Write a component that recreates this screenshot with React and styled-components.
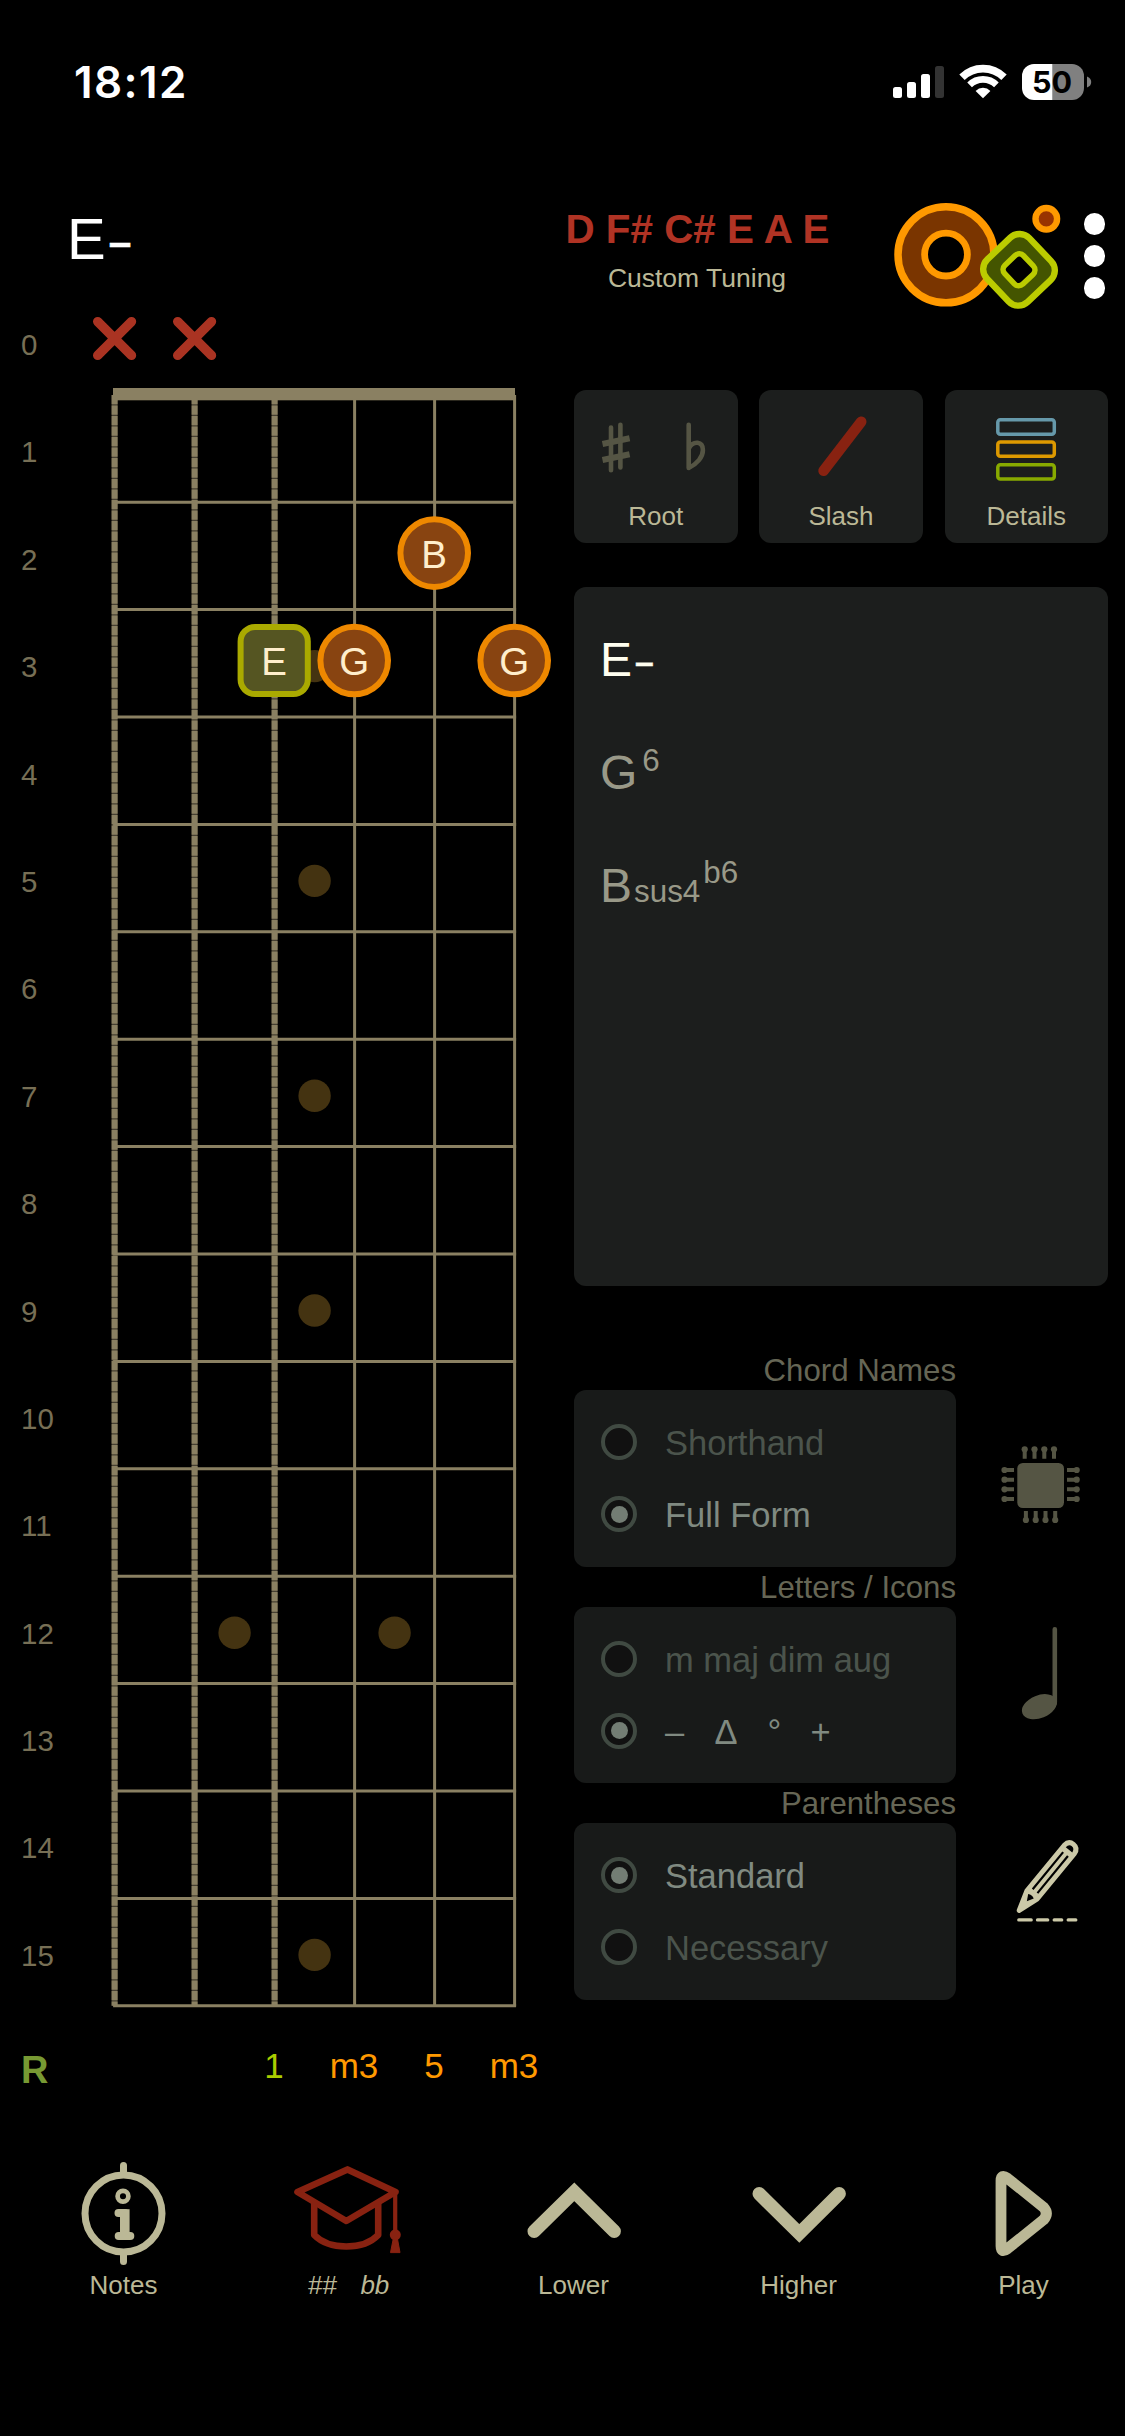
import React from 'react';
import styled, { createGlobalStyle } from 'styled-components';

const GlobalStyle = createGlobalStyle`
  body {
    margin: 0;
    background: #000;
    overflow: hidden;
  }
  * {
    box-sizing: border-box;
  }
  svg {
    display: block;
    flex-shrink: 0;
    overflow: visible;
  }
`;

const Screen = styled.div`
  width: 1125px;
  height: 2436px;
  overflow: hidden;
  background: #000;
  font-family: "Liberation Sans", Arial, sans-serif;
`;

const StatusBar = styled.div`
  height: 130px;
  display: flex;
  justify-content: space-between;
  padding: 60px 30px 0 74px;
`;

const Time = styled.div`
  color: #fff;
  font-family: Inter, sans-serif;
  font-weight: 600;
  font-size: 44px;
  line-height: 44px;
  letter-spacing: 1.4px;
`;

const Header = styled.header`
  height: 162px;
  display: flex;
  align-items: flex-start;
`;

const Title = styled.div`
  width: 558px;
  padding: 79px 0 0 67px;
  color: #fff;
  font-size: 58px;
  line-height: 60px;
`;

const Minus = styled.span`
  font-size: 0.7em;
  line-height: 0;
  font-weight: 700;
  margin-left: 3px;
  vertical-align: 0.08em;
  -webkit-text-stroke: 0.012em currentColor;
`;

const Tuning = styled.div`
  width: 280px;
  margin-right: 42px;
  padding-top: 77px;
  text-align: center;
  white-space: nowrap;
`;

const TuningNotes = styled.div`
  padding-right: 1px;
  color: #b03324;
  font-size: 40.4px;
  line-height: 44px;
  font-weight: 700;
`;

const TuningName = styled.div`
  margin-top: 12px;
  padding-right: 2px;
  color: #bbb896;
  font-size: 26.5px;
  line-height: 30px;
`;

const Menu = styled.div`
  width: 49px;
  padding-top: 83px;
  display: flex;
  flex-direction: column;
  align-items: center;
  gap: 10.4px;
`;

const MenuDot = styled.div`
  width: 21.8px;
  height: 21.8px;
  border-radius: 50%;
  background: #fff;
`;

const Main = styled.main`
  display: flex;
  height: 1831px;
`;

const Left = styled.div`
  width: 574px;
`;

const Neck = styled.div`
  display: flex;
  height: 1718px;
`;

const FretNumbers = styled.div`
  width: 75px;
  padding-left: 21px;
`;

const FretNumber = styled.div`
  height: 107.4px;
  line-height: 106px;
  font-size: 29.5px;
  color: #776f55;
`;

const Intervals = styled.div`
  display: grid;
  grid-template-columns: 74px repeat(6, 80px);
  font-size: 35px;
  line-height: 112px;
  text-align: center;
`;

const RootLabel = styled.div`
  padding: 4px 0 0 21px;
  font-size: 38px;
  font-weight: 700;
  text-align: left;
  color: #779933;
`;

const Interval = styled.div`
  color: ${({ $root }) => ($root ? '#aacc00' : '#ff9900')};
`;

const Right = styled.div`
  width: 534px;
  padding-top: 98px;
`;

const Cards = styled.div`
  display: flex;
  justify-content: space-between;
`;

const Card = styled.button`
  width: 163.5px;
  height: 153px;
  padding: 0;
  border: 0;
  border-radius: 12px;
  background: #1c1e1d;
  display: flex;
  flex-direction: column;
  font-family: inherit;
`;

const CardLabel = styled.span`
  width: 100%;
  text-align: center;
  font-size: 26px;
  line-height: 30px;
  color: #bbb896;
`;

const ChordPanel = styled.div`
  margin-top: 44px;
  height: 699px;
  padding: 16px 0 0 26px;
  border-radius: 12px;
  background: #1c1e1d;
`;

const Chord = styled.div`
  height: 113px;
  line-height: 113px;
  font-size: 48px;
  color: ${({ $active }) => ($active ? '#fffff0' : '#999988')};
`;

const Small = styled.span`
  font-size: 31.4px;
  line-height: 0;
  margin-left: ${({ $gap }) => $gap || 0}px;
  vertical-align: ${({ $up }) => $up || 0}px;
`;

const Options = styled.div`
  margin-top: 64px;
`;

const OptionGroup = styled.section`
  display: grid;
  grid-template-columns: 382px 152px;
  grid-template-rows: 40px 176.6px;
`;

const OptionTitle = styled.div`
  grid-column: 1 / 3;
  width: 382px;
  text-align: right;
  font-size: 31.2px;
  line-height: 42px;
  color: #666655;
`;

const OptionBox = styled.div`
  padding: 16px 0 0 27px;
  border-radius: 12px;
  background: #181a19;
`;

const Option = styled.div`
  height: 72px;
  display: flex;
  align-items: center;
  gap: 28px;
`;

const Radio = styled.span`
  width: 36px;
  height: 36px;
  border-radius: 50%;
  border: 4px solid #404a42;
  background: #111;
  display: flex;
  align-items: center;
  justify-content: center;
  &::after {
    content: "";
    width: 17px;
    height: 17px;
    border-radius: 50%;
    background: ${({ $on }) => ($on ? '#737d74' : 'transparent')};
  }
`;

const OptionText = styled.span`
  padding-top: 2px;
  font-size: 34.5px;
  line-height: 40px;
  white-space: pre;
  color: ${({ $on }) => ($on ? '#808a81' : '#4b544c')};
`;

const Symbols = styled.span`
  display: inline-grid;
  grid-template-columns: 49.5px 53px 43px 30px;
  font-size: 34.5px;
`;

const NavBar = styled.nav`
  display: flex;
  justify-content: space-between;
  padding: 32px 21.5px 0 43.5px;
`;

const NavItem = styled.div`
  width: 160px;
`;

const NavLabel = styled.div`
  text-align: center;
  font-size: 26px;
  line-height: 30px;
  color: #bbb896;
  white-space: pre;
  font-style: ${({ $italic }) => ($italic ? 'italic' : 'normal')};
  word-spacing: ${({ $italic }) => ($italic ? '0.7px' : '0')};
`;

const WOOD = '#8a8062';
const SAND = '#bbb896';
const RED = '#882211';
const OLIVE = '#555544';

const stringX = (i) => 39.6 + i * 80;
const fretY = (n) => 102.8 + n * 107.4;

const inlays = [[2.5, 3], [2.5, 5], [2.5, 7], [2.5, 9], [1.5, 12], [3.5, 12], [2.5, 15]];

const markers = [
  { string: 4, fret: 2, note: 'B' },
  { string: 2, fret: 3, note: 'E', root: true },
  { string: 3, fret: 3, note: 'G' },
  { string: 5, fret: 3, note: 'G' },
];

const intervals = ['', '', '1', 'm3', '5', 'm3'];

function StatusIcons() {
  return (
    <svg width="210" height="44" viewBox="885 60 210 44">
      <rect x="893" y="87" width="9" height="11" rx="2.5" fill="#fff" />
      <rect x="907" y="82" width="9" height="16" rx="2.5" fill="#fff" />
      <rect x="921" y="74" width="9" height="24" rx="2.5" fill="#fff" />
      <rect x="935" y="66" width="9" height="32" rx="2.5" fill="#333" />
      <path d="M962 77.3A29.7 29.7 0 0 1 1004 77.3" fill="none" stroke="#fff" strokeWidth="7.6" />
      <path d="M969.6 84.9A19 19 0 0 1 996.4 84.9" fill="none" stroke="#fff" strokeWidth="6.6" />
      <path d="M983 98.3L975.6 90.9A10.5 10.5 0 0 1 990.4 90.9Z" fill="#fff" />
      <path d="M1052.7 64H1034a12 12 0 0 0-12 12v12a12 12 0 0 0 12 12h18.7z" fill="#fff" />
      <path d="M1052.7 64H1072a12 12 0 0 1 12 12v12a12 12 0 0 1-12 12h-19.3z" fill="#808080" />
      <path d="M1087 76.5q4.2 1.5 4.2 5.5t-4.2 5.5z" fill="#808080" />
      <text x="1052" y="93.3" textAnchor="middle" fontFamily="Inter, sans-serif" fontWeight="700" fontSize="30.5" fill="#000">50</text>
    </svg>
  );
}

function Logo() {
  return (
    <svg width="190" height="180" viewBox="880 130 190 180">
      <circle cx="946" cy="254.8" r="48" fill="#7a3500" stroke="#ff9900" strokeWidth="7.5" />
      <circle cx="946" cy="254.6" r="21.4" fill="#000" stroke="#ff9900" strokeWidth="6.8" />
      <circle cx="1046.3" cy="218.8" r="10.8" fill="#993300" stroke="#ff9900" strokeWidth="6.4" />
      <g stroke="#bbcc00" transform="translate(1019 269.8) rotate(46.5)">
        <rect x="-29.3" y="-29.3" width="58.6" height="58.6" rx="13.5" fill="#445500" strokeWidth="6.4" />
        <rect x="-13" y="-13" width="26" height="26" rx="6" fill="#000" strokeWidth="5.6" />
      </g>
    </svg>
  );
}

function Fretboard() {
  const frets = Array.from({ length: 15 }, (_, i) => i + 1);
  return (
    <svg width="480" height="1718" viewBox="0 0 480 1718">
      {[0, 1].map((i) => (
        <path
          key={i}
          d={`M${stringX(i) - 16.9} 29.6l33.8 33.8m0 -33.8l-33.8 33.8`}
          stroke="#aa3322"
          strokeWidth="9.4"
          strokeLinecap="round"
        />
      ))}
      {inlays.map(([s, f]) => (
        <circle key={`${s}-${f}`} cx={stringX(s)} cy={fretY(f - 0.5) + 2.8} r="16.2" fill="#443311" />
      ))}
      {[0, 1, 2, 3, 4, 5].map((i) => (
        <g key={i} stroke={WOOD}>
          {i < 3 && <path d={`M${stringX(i)} 103V${fretY(15)}`} strokeWidth="6" stroke="#453f31" />}
          <path
            d={`M${stringX(i)} 103V${fretY(15)}`}
            strokeWidth={i < 3 ? 6 : 3}
            strokeDasharray={i < 3 ? '9.2 1.3' : undefined}
          />
        </g>
      ))}
      {frets.map((n) => (
        <path key={n} d={`M${stringX(0) - 1.5} ${fretY(n)}H${stringX(5) + 1.5}`} stroke={WOOD} strokeWidth="3" />
      ))}
      <rect x="38" y="96" width="402" height="12.3" fill={WOOD} />
      {markers.map(({ string, fret, note, root }) => (
        <g key={`${string}-${fret}`} transform={`translate(${stringX(string) - 0.4} ${fretY(fret - 0.5) - 2.8})`}>
          {root ? (
            <rect x="-33.6" y="-33.6" width="67.2" height="67.2" rx="14.5" fill="#555522" stroke="#aaaa00" strokeWidth="6" />
          ) : (
            <circle r="33.8" fill="#884411" stroke="#ee8800" strokeWidth="6" />
          )}
          <text y="14.5" textAnchor="middle" fontSize="38.5" fill="#ffeecc">{note}</text>
        </g>
      ))}
    </svg>
  );
}

function RootIcon() {
  return (
    <svg width="163" height="111" viewBox="0 0 163 111" fill="none" stroke={OLIVE} strokeWidth="4.6">
      <path d="M37 37.6V80.3M46.4 34.8V77.5" strokeLinecap="round" />
      <path d="M28.5 54L55.6 48.2M28.5 70L55.6 64.3" strokeWidth="6" />
      <path d="M114.7 34.8V78C123 74 129 67 128.9 60C128.8 51 119.5 50.5 115 58" strokeLinecap="round" strokeLinejoin="round" />
    </svg>
  );
}

function SlashIcon() {
  return (
    <svg width="163" height="111" viewBox="0 0 163 111">
      <path d="M64.6 80.8L102.2 31.8" stroke={RED} strokeWidth="10.6" strokeLinecap="round" />
    </svg>
  );
}

function DetailsIcon() {
  return (
    <svg width="163" height="111" viewBox="0 0 163 111" fill="none" strokeWidth="3.5">
      <rect x="52.8" y="29.7" width="56.5" height="14.5" rx="2.5" stroke="#6699aa" />
      <rect x="52.8" y="52.1" width="56.5" height="14.2" rx="2.5" stroke="#dd9900" />
      <rect x="52.8" y="74.7" width="56.5" height="14.2" rx="2.5" stroke="#88aa00" />
    </svg>
  );
}

function ChipIcon() {
  const top = [68.7, 78.5, 88.3, 98];
  const side = [80, 89.7, 99.3, 109];
  return (
    <svg width="152" height="177" viewBox="0 0 152 177" fill={OLIVE} stroke={OLIVE}>
      <rect x="61.3" y="73" width="46.7" height="45" rx="5.5" stroke="none" />
      {top.map((x) => (
        <g key={x} strokeWidth="4">
          <path d={`M${x} 59V68.7M${x + 1.2} 121V131`} />
          <circle cx={x} cy="59.3" r="3.1" stroke="none" />
          <circle cx={x + 1.2} cy="130" r="3.1" stroke="none" />
        </g>
      ))}
      {side.map((y) => (
        <g key={y} strokeWidth="4">
          <path d={`M48.5 ${y}H58M111 ${y}H121`} />
          <circle cx="48.5" cy={y} r="3.1" stroke="none" />
          <circle cx="120.7" cy={y} r="3.1" stroke="none" />
        </g>
      ))}
    </svg>
  );
}

function NoteIcon() {
  return (
    <svg width="152" height="177" viewBox="0 0 152 177" fill={OLIVE}>
      <path d="M96.5 22.3a2.3 2.3 0 0 1 4.6 0V95q0 4-4.6 8z" />
      <ellipse cx="83.4" cy="99.7" rx="18.3" ry="11.4" transform="rotate(-22 83.4 99.7)" />
    </svg>
  );
}

function PencilIcon() {
  return (
    <svg width="152" height="177" viewBox="0 0 152 177">
      <g transform="translate(61.3 89.8) rotate(-50.6)">
        <path
          d="M3 0L23 -6.5H82Q88.5 -6 88.5 0T82 6.5H23Z"
          fill="#ccc9a8"
          stroke="#ccc9a8"
          strokeWidth="5"
          strokeLinejoin="round"
        />
        <path d="M28 -3.1H76M28 3.1H76" stroke="#000" strokeWidth="2.2" />
        <path d="M15 0L21.5 -3.6Q23.5 0 21.5 3.6Z" fill="#000" />
        <path d="M81.5 -4.2Q86 -3.6 86 0T81.5 4.2Z" fill="#000" />
      </g>
      <path
        d="M62.8 96.9H75.2M81.5 96.9H91.7M98.2 96.9H105.7M112.2 96.9H119.8"
        stroke="#ccc9a8"
        strokeWidth="3.3"
        strokeLinecap="round"
      />
    </svg>
  );
}

function InfoIcon() {
  return (
    <svg width="160" height="115" viewBox="0 0 160 115" fill="none" stroke={SAND}>
      <circle cx="79.5" cy="58.5" r="38.5" strokeWidth="7" />
      <path d="M79.5 10.5V18M79.5 99V106.5" strokeWidth="7" strokeLinecap="round" />
      <circle cx="79" cy="41.3" r="5.4" strokeWidth="4.7" />
      <path d="M74.5 58H81M74.7 81H86.3" strokeWidth="8" strokeLinecap="round" />
      <path d="M80.8 54.2V81" strokeWidth="9.6" />
    </svg>
  );
}

function CapIcon() {
  return (
    <svg width="160" height="115" viewBox="1.5 0 160 115" fill="none" stroke={RED} strokeWidth="6.6" strokeLinejoin="round">
      <path d="M80 14.4L128 37L78.8 66L30 37Z" />
      <path d="M46.7 48V80Q58 91.5 78.8 91.5T110.7 80V48" />
      <path d="M127.7 37V79" strokeWidth="4.2" />
      <circle cx="127.8" cy="79.8" r="5.5" fill={RED} stroke="none" />
      <path d="M125.7 84H130L132.5 97.6H123Z" fill={RED} stroke={RED} strokeWidth="1" />
    </svg>
  );
}

function UpIcon() {
  return (
    <svg width="160" height="115" viewBox="0 0 160 115" fill="none" stroke={SAND} strokeWidth="13.4" strokeLinecap="round">
      <path d="M40.2 76.2L80.3 36.8L120.2 76.2" />
    </svg>
  );
}

function DownIcon() {
  return (
    <svg width="160" height="115" viewBox="0 0 160 115" fill="none" stroke={SAND} strokeWidth="13.4" strokeLinecap="round">
      <path d="M40.2 38.8L80.3 78.4L120.2 38.8" />
    </svg>
  );
}

function PlayIcon() {
  return (
    <svg width="160" height="115" viewBox="1.2 0 160 115" fill="none" stroke={SAND} strokeWidth="10.8">
      <path d="M58.2 26Q58.2 18.5 64.5 23.2L101 52.5Q106 58.3 101 64.5L64.5 93.8Q58.2 98.5 58.2 91Z" strokeLinejoin="round" />
    </svg>
  );
}

const groups = [
  {
    title: 'Chord Names',
    options: ['Shorthand', 'Full Form'],
    selected: 1,
    icon: <ChipIcon />,
  },
  {
    title: 'Letters / Icons',
    options: [
      'm maj dim aug',
      <Symbols key="symbols">
        <span>–</span>
        <span>Δ</span>
        <span>°</span>
        <span>+</span>
      </Symbols>,
    ],
    selected: 1,
    icon: <NoteIcon />,
  },
  {
    title: 'Parentheses',
    options: ['Standard', 'Necessary'],
    selected: 0,
    icon: <PencilIcon />,
  },
];

const navItems = [
  { label: 'Notes', icon: <InfoIcon /> },
  { label: '##   bb', icon: <CapIcon />, italic: true },
  { label: 'Lower', icon: <UpIcon /> },
  { label: 'Higher', icon: <DownIcon /> },
  { label: 'Play', icon: <PlayIcon /> },
];

export default function App() {
  return (
    <Screen>
      <GlobalStyle />
      <StatusBar>
        <Time>18:12</Time>
        <StatusIcons />
      </StatusBar>

      <Header>
        <Title>E<Minus>–</Minus></Title>
        <Tuning>
          <TuningNotes>D F# C# E A E</TuningNotes>
          <TuningName>Custom Tuning</TuningName>
        </Tuning>
        <Logo />
        <Menu>
          <MenuDot />
          <MenuDot />
          <MenuDot />
        </Menu>
      </Header>

      <Main>
        <Left>
          <Neck>
            <FretNumbers>
              {Array.from({ length: 16 }, (_, n) => (
                <FretNumber key={n}>{n}</FretNumber>
              ))}
            </FretNumbers>
            <Fretboard />
          </Neck>
          <Intervals>
            <RootLabel>R</RootLabel>
            {intervals.map((name, i) => (
              <Interval key={i} $root={name === '1'}>{name}</Interval>
            ))}
          </Intervals>
        </Left>

        <Right>
          <Cards>
            <Card><RootIcon /><CardLabel>Root</CardLabel></Card>
            <Card><SlashIcon /><CardLabel>Slash</CardLabel></Card>
            <Card><DetailsIcon /><CardLabel>Details</CardLabel></Card>
          </Cards>

          <ChordPanel>
            <Chord $active>E<Minus>–</Minus></Chord>
            <Chord>G<Small $gap={5} $up={18}>6</Small></Chord>
            <Chord>B<Small $gap={2}>sus4</Small><Small $gap={3} $up={19}>b6</Small></Chord>
          </ChordPanel>

          <Options>
            {groups.map(({ title, options, selected, icon }) => (
              <OptionGroup key={title}>
                <OptionTitle>{title}</OptionTitle>
                <OptionBox>
                  {options.map((option, i) => (
                    <Option key={i}>
                      <Radio $on={i === selected} />
                      <OptionText $on={i === selected}>{option}</OptionText>
                    </Option>
                  ))}
                </OptionBox>
                {icon}
              </OptionGroup>
            ))}
          </Options>
        </Right>
      </Main>

      <NavBar>
        {navItems.map(({ label, icon, italic }) => (
          <NavItem key={label}>
            {icon}
            <NavLabel $italic={italic}>{label}</NavLabel>
          </NavItem>
        ))}
      </NavBar>
    </Screen>
  );
}
